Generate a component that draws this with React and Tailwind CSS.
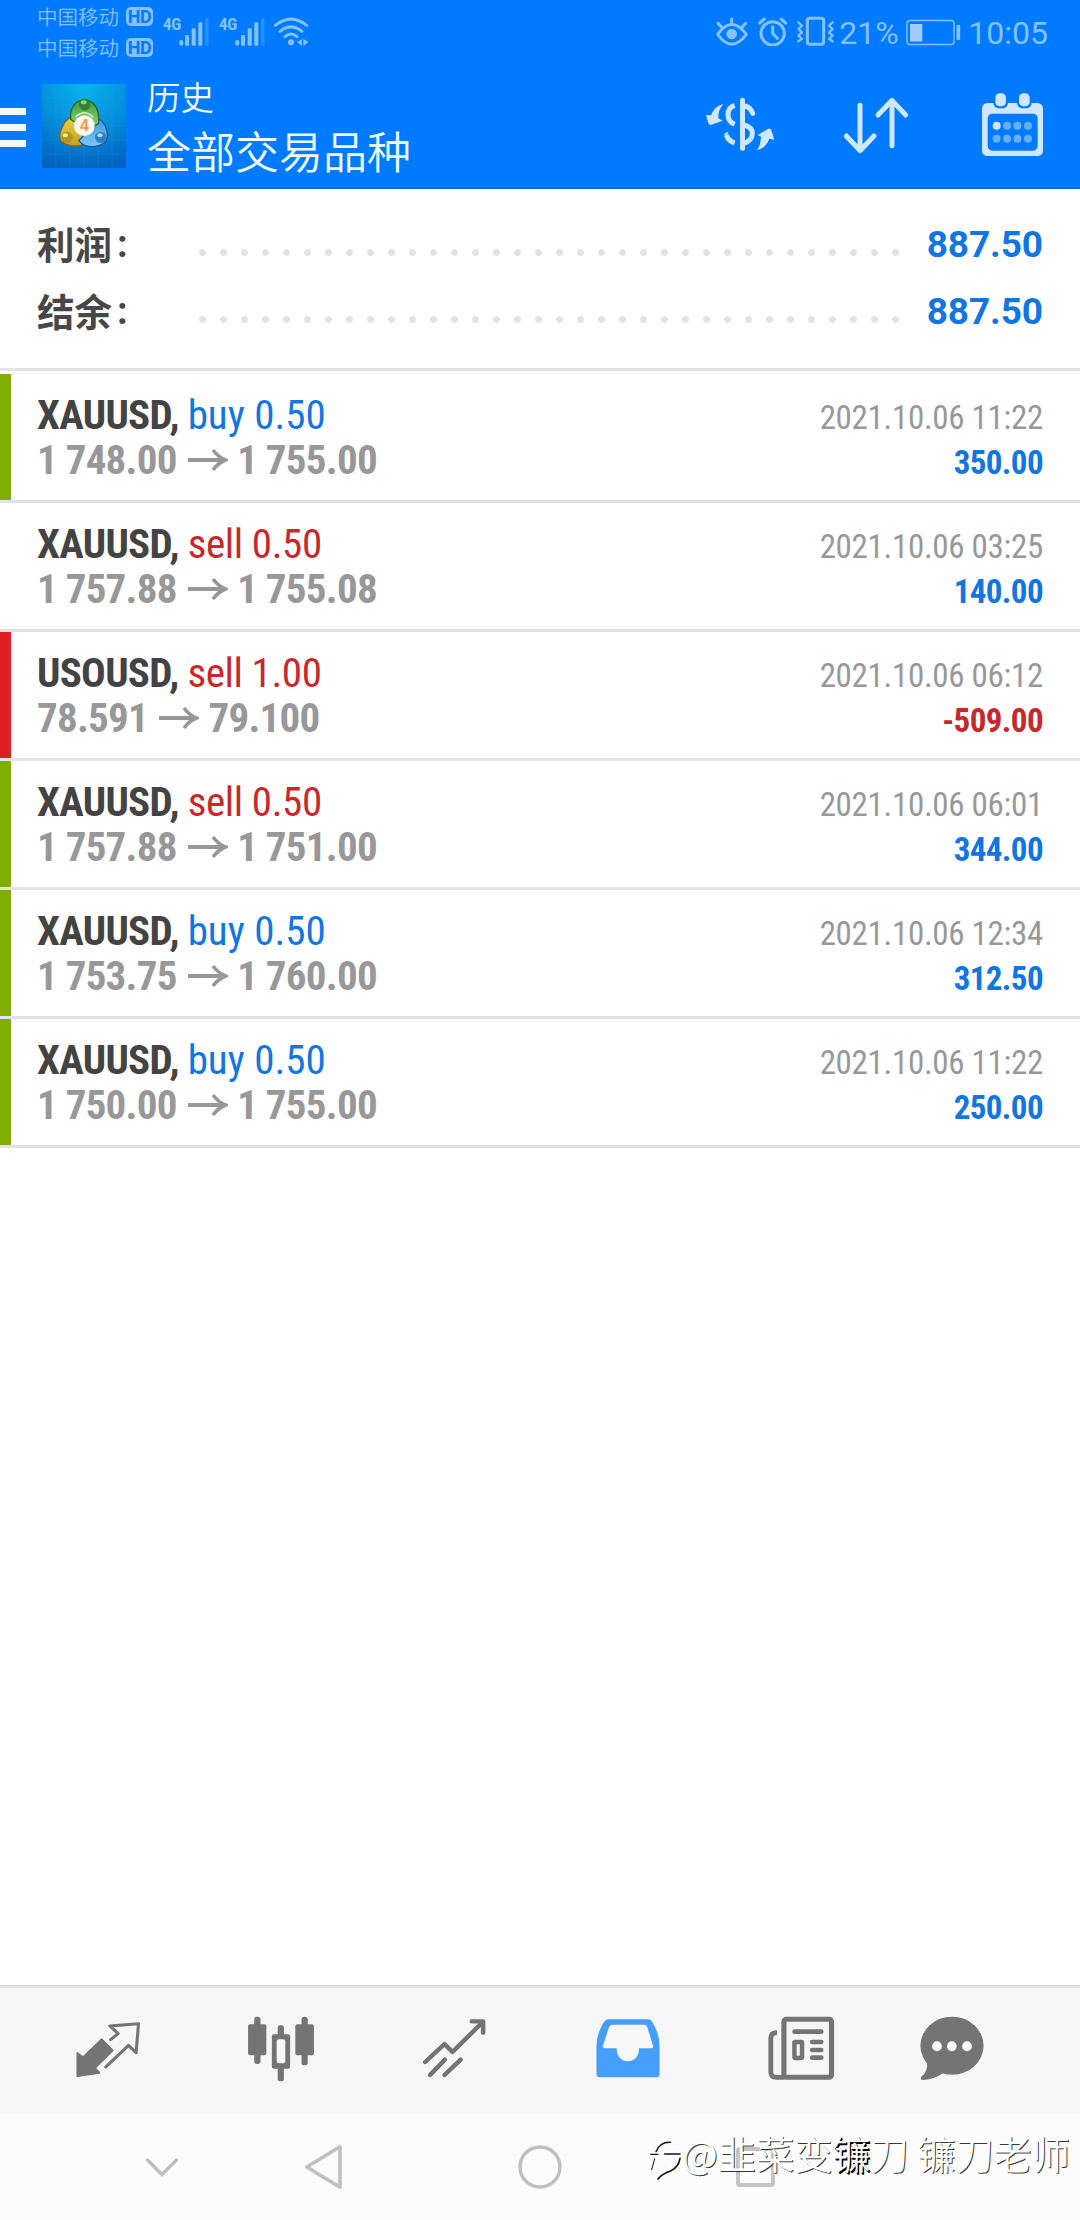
import React from 'react';

const deals = [
  { symbol: 'XAUUSD', side: 'buy', volume: '0.50', open: '1 748.00', close: '1 755.00', time: '2021.10.06 11:22', profit: '350.00', mark: 'bg-[#80ae05]' },
  { symbol: 'XAUUSD', side: 'sell', volume: '0.50', open: '1 757.88', close: '1 755.08', time: '2021.10.06 03:25', profit: '140.00', mark: 'bg-transparent' },
  { symbol: 'USOUSD', side: 'sell', volume: '1.00', open: '78.591', close: '79.100', time: '2021.10.06 06:12', profit: '-509.00', mark: 'bg-[#e11f23]' },
  { symbol: 'XAUUSD', side: 'sell', volume: '0.50', open: '1 757.88', close: '1 751.00', time: '2021.10.06 06:01', profit: '344.00', mark: 'bg-[#80ae05]' },
  { symbol: 'XAUUSD', side: 'buy', volume: '0.50', open: '1 753.75', close: '1 760.00', time: '2021.10.06 12:34', profit: '312.50', mark: 'bg-[#80ae05]' },
  { symbol: 'XAUUSD', side: 'buy', volume: '0.50', open: '1 750.00', close: '1 755.00', time: '2021.10.06 11:22', profit: '250.00', mark: 'bg-[#80ae05]' },
];

const Carrier = () => (
  <div className="flex h-[31px] items-start gap-[7px]">
    <span className="-mt-px text-[20.5px] leading-[20px] font-[350]">中国移动</span>
    <span className="flex h-[19px] w-[27px] items-center justify-center rounded-[5px] bg-[#85c1ff] font-['Roboto'] text-[18px] leading-none font-bold tracking-[-0.5px] text-[#007aff]">
      HD
    </span>
  </div>
);

const Signal = () => (
  <div className="flex w-[56px] items-start">
    <span className="mt-[8px] w-[16px] font-['Roboto_Condensed'] text-[17px] leading-[17px] font-bold tracking-[-0.3px]">4G</span>
    <svg className="mt-[8px] h-[30px] w-[30px]" viewBox="0 0 30 30" fill="currentColor">
      <rect x="0.3" y="24" width="4" height="5.7" rx="1.9" />
      <rect x="6" y="19" width="4" height="10.7" rx="1.2" />
      <rect x="12.7" y="12.3" width="4" height="17.4" rx="1.2" />
      <rect x="19.3" y="6.3" width="4" height="23.4" rx="1.2" />
      <rect x="26" y="1.7" width="3.5" height="28" rx="1.2" opacity="0.3" />
    </svg>
  </div>
);

const StatusBar = () => (
  <div className="flex h-[70px] items-start justify-between pr-[32px] pl-[37px] text-[#85c1ff]">
    <div className="flex items-start">
      <div className="flex w-[126px] flex-col pt-[7px]">
        <Carrier />
        <Carrier />
      </div>
      <div className="flex pt-[8px]">
        <Signal />
        <Signal />
        {/* Wi-Fi */}
        <svg className="mt-[8px] -ml-[2px] h-[30px] w-[36px]" viewBox="817 48 108 90" fill="none" stroke="currentColor" strokeWidth="9" strokeLinecap="round">
          <path d="M824 76 Q871 39 918 76" />
          <path d="M838 94 Q871 67 904 94" />
          <path d="M853 110 Q871 94 889 110" />
          <circle cx="871" cy="127" r="9" fill="currentColor" stroke="none" />
          <path d="M889 127 L904 117 V137 Z M908 116 L923 127 L908 138 Z" fill="currentColor" stroke="none" />
        </svg>
      </div>
    </div>

    <div className="flex items-start pt-[16px]">
      <svg className="h-[30px] w-[120px]" viewBox="222 48 360 90" fill="none" stroke="currentColor" strokeWidth="9" strokeLinecap="round" strokeLinejoin="round">
        {/* Eye comfort */}
        <path d="M230 103 Q272 44 316 103 Q272 162 230 103 Z" />
        <circle cx="272" cy="102" r="16" fill="currentColor" stroke="none" />
        <path d="M272 57 V70 M231 70 L242 82 M314 70 L303 82" />
        {/* Alarm */}
        <circle cx="395" cy="100" r="35" />
        <path d="M395 80 V100 L409 115 M356 69 L370 57 M420 57 L434 69" />
        {/* Vibrate */}
        <rect x="499" y="55" width="49" height="78" rx="7" />
        <path d="M472 67 L483 77 L472 87 L483 97 L472 107 L483 117 L472 124" strokeWidth="7" />
        <path d="M575 67 L564 77 L575 87 L564 97 L575 107 L564 117 L575 124" strokeWidth="7" />
      </svg>
      <span className="-mt-px ml-[4px] w-[67px] font-['Roboto'] text-[32px] leading-[36px]">21%</span>
      <svg className="mt-[2px] h-[30px] w-[56px]" viewBox="0 0 56 30" fill="none">
        <rect x="1" y="2.5" width="47" height="24" rx="3" stroke="currentColor" strokeWidth="1.4" />
        <rect x="4" y="6" width="12.3" height="17.5" fill="#9fcbff" />
        <rect x="50.5" y="7" width="3.7" height="15" rx="1" fill="currentColor" />
      </svg>
      <span className="-mt-px ml-[6px] font-['Roboto'] text-[32px] leading-[36px]">10:05</span>
    </div>
  </div>
);

const AppLogo = () => (
  <svg className="mt-[14px] h-[84px] w-[84px]" viewBox="18 18 252 252">
    <defs>
      <radialGradient id="logoBg" cx="0.5" cy="0" r="1.05">
        <stop offset="0" stopColor="#08b4f0" />
        <stop offset="0.5" stopColor="#0590dc" />
        <stop offset="1" stopColor="#0260bf" />
      </radialGradient>
      <linearGradient id="green" x1="0" y1="0" x2="0" y2="1">
        <stop offset="0" stopColor="#3f9a3c" />
        <stop offset="1" stopColor="#8fd07a" />
      </linearGradient>
      <linearGradient id="yellow" x1="0" y1="0" x2="0" y2="1">
        <stop offset="0" stopColor="#e0d452" />
        <stop offset="1" stopColor="#c9a11c" />
      </linearGradient>
      <linearGradient id="sky" x1="0" y1="0" x2="0" y2="1">
        <stop offset="0" stopColor="#3c98dc" />
        <stop offset="1" stopColor="#7cc6f6" />
      </linearGradient>
    </defs>
    <rect x="18" y="18" width="252" height="252" fill="url(#logoBg)" />
    <path d="M60 18V270M102 18V270M144 18V270M186 18V270M228 18V270M18 60H270M18 102H270M18 144H270M18 186H270M18 228H270" stroke="#3fb4f2" strokeWidth="1.5" opacity="0.25" />
    <path d="M122 116 Q90 116 80 146 Q66 170 74 188 Q95 208 136 202 L150 180 Z" fill="url(#yellow)" stroke="#7c6a1c" strokeWidth="4" />
    <path d="M170 116 Q205 122 213 160 Q220 193 190 202 Q150 214 128 188 L150 165 Z" fill="url(#sky)" stroke="#1c5c9c" strokeWidth="4" />
    <path d="M104 124 Q100 72 146 64 Q192 72 188 136 L172 146 Q146 100 116 132 Z" fill="url(#green)" stroke="#1f6a2c" strokeWidth="4" />
    <path d="M119 116 Q146 92 172 118" fill="none" stroke="#c7ecb8" strokeWidth="5" />
    <circle cx="146" cy="80" r="17" fill="#2f8433" />
    <ellipse cx="143" cy="73" rx="9" ry="6" fill="#8ccf80" />
    <circle cx="93" cy="178" r="17" fill="#b3931d" />
    <ellipse cx="88" cy="172" rx="8" ry="6" fill="#f4ec8e" />
    <circle cx="194" cy="178" r="17" fill="#2f7fc4" />
    <ellipse cx="192" cy="172" rx="8" ry="6" fill="#aee0fc" />
    <circle cx="145" cy="143" r="31" fill="#fff6f0" />
    <text x="145" y="160" textAnchor="middle" fontFamily="Liberation Sans" fontSize="48" fontWeight="bold" fill="#f09a3c">4</text>
  </svg>
);

const TitleBar = () => (
  <div className="flex h-[117px] items-start">
    <div className="mt-[38px] flex w-[42px] flex-col gap-[9px]">
      <div className="h-[7px] w-[26px] bg-[#eefaff]" />
      <div className="h-[7px] w-[26px] bg-[#eefaff]" />
      <div className="h-[7px] w-[26px] bg-[#eefaff]" />
    </div>
    <AppLogo />
    <div className="ml-[21px] flex flex-1 flex-col text-[#effbff]">
      <span className="mt-[3px] text-[33.5px] leading-[46px] font-[350]">历史</span>
      <span className="mt-px text-[44px] leading-[60px] font-[350]">全部交易品种</span>
    </div>
    <div className="flex items-start text-[#cfe6ff]">
      {/* Symbol filter */}
      <svg className="mt-[18px] h-[76px] w-[90px]" viewBox="0 0 270 228" fill="none" stroke="currentColor" strokeWidth="15">
        <path d="M127.500 37 V181" strokeLinecap="round" />
        <path d="M104 52 Q84 58 84 80 Q84 100 104 109" />
        <path d="M135 54 Q152 58 158 76" strokeLinecap="round" />
        <path d="M132 111 Q158 118 157 137 Q156 158 132 166" />
        <path d="M79 141 Q84 158 104 165" />
        <path d="M76 140 a6 6 0 0 1 6 -4" strokeLinecap="round" strokeWidth="6" />
        <path d="M70 48 Q43 54 33 82 L18 81 L25 106 Q28 112 34 110 L68 98 L55 91 Q54 66 70 48 Z" fill="currentColor" stroke="none" />
        <path d="M170 187 Q182 172 183 146 L173 141 L205 122 Q212 120 214 127 L223 155 L208 152 Q197 181 170 187 Z" fill="currentColor" stroke="none" />
      </svg>
      {/* Sort */}
      <svg className="mt-[26px] ml-[51px] h-[60px] w-[70px]" viewBox="603 288 210 180" fill="none" stroke="currentColor" strokeWidth="15" strokeLinecap="round" strokeLinejoin="round">
        <path d="M660 316 V450 M619 408 L660 452 L702 408" />
        <path d="M756 437 V303 M714 345 L756 301 L797 345" />
      </svg>
      {/* Period */}
      <svg className="mt-[22px] mr-[35px] ml-[69px] h-[66px] w-[65px]" viewBox="1020 276 195 198">
        <rect x="1026" y="309" width="183" height="159" rx="16" fill="currentColor" />
        <rect x="1043" y="341" width="150" height="111" rx="14" fill="#007aff" />
        <rect x="1060" y="276" width="44" height="49" rx="17" fill="#007aff" />
        <rect x="1131" y="276" width="44" height="49" rx="17" fill="#007aff" />
        <rect x="1066" y="280" width="32" height="39" rx="13" fill="currentColor" />
        <rect x="1137" y="280" width="32" height="39" rx="13" fill="currentColor" />
        <circle cx="1070" cy="377" r="12" fill="currentColor" />
        <g fill="#66aeff">
          <circle cx="1101" cy="377" r="12" />
          <circle cx="1132" cy="377" r="12" />
          <circle cx="1164" cy="377" r="12" />
          <circle cx="1070" cy="416" r="12" />
          <circle cx="1101" cy="416" r="12" />
          <circle cx="1132" cy="416" r="12" />
          <circle cx="1164" cy="416" r="12" />
        </g>
      </svg>
    </div>
  </div>
);

const SummaryRow = ({ label, value }) => (
  <div className="flex h-[67px] items-center pr-[37px] pl-[37px]">
    <div className="-mt-[4px] flex w-[155px] items-center text-[#474747]">
      <span className="text-[37.5px] leading-[60px] font-bold">{label}</span>
      <span className="mt-[3px] ml-[5px] font-['Roboto'] text-[38px] leading-[60px] font-bold">:</span>
    </div>
    <div className="mt-[15px] h-[21px] w-[714px] bg-[radial-gradient(circle,#e2e2e2_3px,transparent_3.8px)] bg-[length:21px_21px]" />
    <span className="mt-px flex-1 text-right font-['Roboto'] text-[37px] leading-[60px] font-bold tracking-[-0.1px] text-[#1276e2]">{value}</span>
  </div>
);

const DealRow = ({ deal }) => (
  <div className="flex h-[129px] border-b-3 border-[#e3e3e3]">
    <div className={`w-[11px] ${deal.mark}`} />
    <div className="flex-1 pt-[18.5px] pr-[37px] pl-[26px] font-['Roboto_Condensed']">
      <div className="flex h-[45px] items-baseline justify-between leading-[45px]">
        <div className="text-[41px]">
          <span className="font-bold tracking-[-0.7px] text-[#434343]">{deal.symbol}, </span>
          <span className={deal.side === 'buy' ? 'text-[#1276e2]' : 'tracking-[-0.4px] text-[#c8272c]'}>
            {deal.side} {deal.volume}
          </span>
        </div>
        <span className="text-[33px] tracking-[-0.3px] text-[#98989a]">{deal.time}</span>
      </div>
      <div className="flex h-[45px] items-baseline justify-between leading-[45px]">
        <div className="flex items-baseline text-[41px] font-bold tracking-[-0.75px] text-[#98989a]">
          <span>{deal.open}</span>
          <svg className="mr-[9.5px] ml-[11px] h-[28px] w-[40px]" viewBox="0 0 40 28" fill="none" stroke="currentColor">
            <path d="M0 14 H36" strokeWidth="4" />
            <path d="M25 4 Q30 11 37.500 14 Q30 17 25 24" strokeWidth="3.6" />
          </svg>
          <span>{deal.close}</span>
        </div>
        <span className={deal.profit.startsWith('-') ? 'text-[33px] font-bold tracking-[-0.6px] text-[#c8272c]' : 'text-[33px] font-bold tracking-[-0.6px] text-[#1276e2]'}>
          {deal.profit}
        </span>
      </div>
    </div>
  </div>
);

const TabIcon = ({ viewBox, children }) => (
  <svg className="h-[66px] w-[70px]" viewBox={viewBox} preserveAspectRatio="none" fill="currentColor" strokeLinecap="round" strokeLinejoin="round">
    {children}
  </svg>
);

const TabBar = () => (
  <div className="flex h-[129px] border-t-3 border-[#e1e1e1] bg-[#f6f6f6] pt-[28px] pl-[21px] text-[#747474]">
    {/* Quotes */}
    <div className="flex w-[173.3px] justify-center">
      <TabIcon viewBox="211 137 203 198">
        <path d="M224 249 L240 261 L294 207 L326 240 L274 293 L287 307 L224 317 Z" stroke="currentColor" strokeWidth="6" />
        <path d="M320 208 L342 190 L318 167 L401 160 L394 247 L372 225 L306 290" fill="none" stroke="currentColor" strokeWidth="9" />
      </TabIcon>
    </div>
    {/* Charts */}
    <div className="flex w-[173.3px] justify-center">
      <TabIcon viewBox="712 137 203 198">
        <rect x="736" y="139" width="18" height="142" rx="8" />
        <rect x="718" y="162" width="53" height="93" rx="6" />
        <rect x="804" y="165" width="18" height="168" rx="8" />
        <rect x="787" y="192" width="53" height="103" rx="6" />
        <rect x="801" y="207" width="25" height="72" rx="6" fill="#f8f8f8" />
        <rect x="873" y="139" width="18" height="146" rx="8" />
        <rect x="855" y="162" width="54" height="93" rx="6" />
      </TabIcon>
    </div>
    {/* Trade */}
    <div className="flex w-[173.3px] justify-center">
      <TabIcon viewBox="1214 137 203 198">
        <g fill="none" stroke="currentColor" strokeWidth="13">
          <path d="M1232 275 L1288 221 L1311 245 L1399 155" />
          <path d="M1367 153 H1400 V187" />
          <path d="M1246 314 L1289 268 M1288 314 L1335 268" />
        </g>
      </TabIcon>
    </div>
    {/* History */}
    <div className="flex w-[173.3px] justify-center text-[#449efa]">
      <TabIcon viewBox="152 137 203 198">
        <path d="M197 147 H312 Q320 147 324 155 Q345 190 345 228 V312 Q345 321 336 321 H171 Q162 321 162 312 V228 Q162 190 184 155 Q188 147 197 147 Z" />
        <path d="M210 163 H299 Q306 163 309 169 L326 226 Q328 234 320 234 H285 V240 A32 33 0 0 1 221 240 V234 H187 Q179 234 181 226 L199 169 Q202 163 210 163 Z" fill="#f8f8f8" />
      </TabIcon>
    </div>
    {/* News */}
    <div className="flex w-[174.3px] justify-center">
      <TabIcon viewBox="658 137 203 198">
        <g fill="none" stroke="currentColor" strokeWidth="14">
          <rect x="710" y="147" width="138" height="174" rx="7" strokeWidth="15" />
          <path d="M690 187 Q672 187 672 203 V305 Q672 321 688 321 H710" strokeLinecap="butt" />
          <path d="M741 184 H818 M792 215 H818 M792 239 H818 M792 262 H818" />
          <rect x="740.500" y="215" width="22" height="48" rx="2" strokeWidth="13" />
        </g>
      </TabIcon>
    </div>
    {/* Chat */}
    <div className="flex w-[127px] justify-center">
      <TabIcon viewBox="1092 137 203 198">
        <ellipse cx="1193.500" cy="226" rx="91.500" ry="87" />
        <path d="M1120 270 Q1126 304 1104 320 Q1100 329 1110 329 Q1144 326 1168 308 Z" />
        <g fill="#fbfbfb">
          <ellipse cx="1150" cy="228" rx="14" ry="15" />
          <ellipse cx="1193" cy="228" rx="14" ry="15" />
          <ellipse cx="1237" cy="228" rx="14" ry="15" />
        </g>
      </TabIcon>
    </div>
  </div>
);

const SystemNav = () => (
  <div className="flex h-[106px] items-center bg-[#fcfcfc]">
    <svg className="ml-[144px] h-[22px] w-[36px]" viewBox="0 0 36 22" fill="none" stroke="#bfbfbf" strokeWidth="3.4" strokeLinecap="round">
      <path d="M3.500 4 L18 18.500 L32.500 4" />
    </svg>
    <svg className="ml-[124px] h-[46px] w-[40px]" viewBox="0 0 40 46" fill="none" stroke="#bfbfbf" strokeWidth="3.6" strokeLinejoin="round">
      <path d="M2.800 23 L36 2.800 V43.200 Z" />
    </svg>
    <svg className="ml-[174px] h-[44px] w-[44px]" viewBox="0 0 44 44" fill="none" stroke="#bfbfbf" strokeWidth="3.4">
      <circle cx="22" cy="22" r="20" />
    </svg>
    <div className="ml-[174px] h-[40px] w-[39px] rounded-[4px] border-4 border-[#c4c4c4]" />
  </div>
);

const Watermark = () => (
  <div className="absolute right-[10px] bottom-[39px] flex items-center">
    <svg className="mt-[14px] h-[42px] w-[34px]" viewBox="16 94 102 126" fill="none" strokeLinecap="round">
      <g stroke="#ffffff" strokeWidth="9">
        <path d="M20 136 H46 M62 134 H108 Q112 160 90 176 Q66 186 44 208" />
      </g>
      <g stroke="#111111">
        <path d="M24 140 H46 M40 132 Q52 102 84 104" strokeWidth="4" />
        <path d="M66 139 H112" strokeWidth="5" />
        <path d="M112 152 Q108 178 84 190 Q58 198 46 214" strokeWidth="5" />
        <path d="M36 154 L27 186" strokeWidth="3" />
      </g>
    </svg>
    <span className="text-[38.2px] leading-[54px] font-[350] whitespace-pre text-white [text-shadow:1px_1px_0.5px_rgba(0,0,0,0.8)]">
      @韭菜变<span className="[text-shadow:1px_1px_0_#000,1.5px_1.5px_0_#000]">镰</span>刀 镰刀老师
    </span>
  </div>
);

export default function App() {
  return (
    <div className="relative flex h-[2220px] w-[1080px] flex-col overflow-hidden bg-white font-['Noto_Sans_CJK_SC',sans-serif]">
      <header className="border-b-2 border-[#0f69c9] bg-[#007aff]">
        <StatusBar />
        <TitleBar />
      </header>

      <section className="mb-[3px] h-[182px] border-b-3 border-[#e3e3e3] pt-[22px]">
        <SummaryRow label="利润" value="887.50" />
        <SummaryRow label="结余" value="887.50" />
      </section>

      <main className="flex-1">
        {deals.map((deal, index) => (
          <DealRow key={index} deal={deal} />
        ))}
      </main>

      <TabBar />
      <SystemNav />
      <Watermark />
    </div>
  );
}
